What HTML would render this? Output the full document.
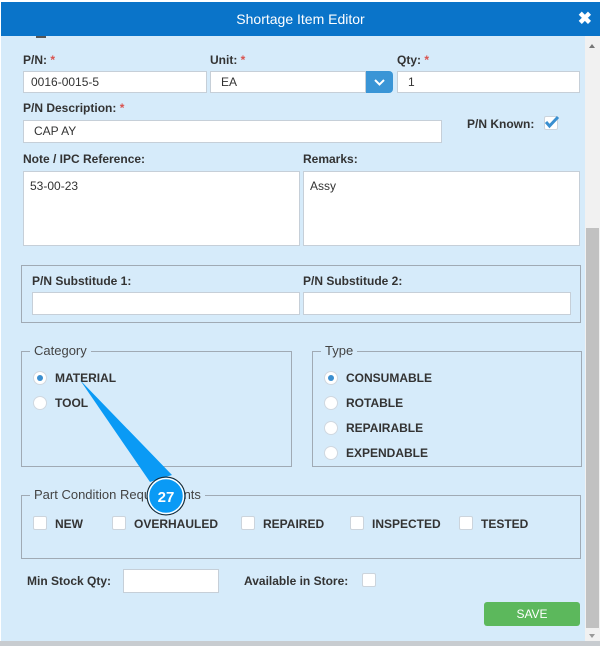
<!DOCTYPE html>
<html><head><style>
*{box-sizing:border-box;margin:0;padding:0}
body{width:600px;height:646px;background:#fff;font-family:"Liberation Sans",Arial,sans-serif;font-size:12px;color:#333;position:relative;overflow:hidden}
.a{position:absolute}
.hdr{left:1px;top:2px;width:599px;height:34px;background:#0a74c9;color:#fff;font-size:14px;text-align:center;line-height:34px}
.body{left:1px;top:36px;width:584px;height:606px;background:#d6ebfa}
.lbl{font-weight:bold;font-size:12px;color:#333}
.req{color:#d9534f}
.in{background:#fff;border:1px solid #c6cfd8;font-size:12px;padding-left:7px;line-height:20px}
fieldset{position:absolute;border:1px solid #a0aab4}
.leg{position:absolute;background:#d6ebfa;font-size:13px;color:#444;padding:0 4px}
.rad{position:absolute;width:14px;height:14px;border-radius:50%;background:#fff;border:1px solid #d0d8e0}
.rad.on::after{content:"";position:absolute;left:3px;top:3px;width:6px;height:6px;border-radius:50%;background:#3a8fd0}
.cb{position:absolute;width:14px;height:14px;background:#fff;border:1px solid #ccd4dc;border-radius:2px}
.t{position:absolute;font-weight:bold;font-size:12px;color:#333}
</style></head><body>
<div class="a hdr">Shortage Item Editor<span style="position:absolute;right:8px;top:0;font-size:17px;font-weight:bold">✖</span></div>
<div class="a body"></div>
<div class="a" style="left:36px;top:36px;width:10px;height:2px;background:#555"></div>
<div class="a" style="left:585px;top:36px;width:15px;height:606px;background:#f1f1f1"></div>
<div class="a" style="left:586px;top:228px;width:13px;height:400px;background:#c1c1c1"></div>
<div class="a" style="left:589px;top:44px;border:3px solid transparent;border-bottom:4px solid #777;border-top:0"></div>
<div class="a" style="left:589px;top:634px;border:3px solid transparent;border-top:4px solid #999;border-bottom:0"></div>
<div class="a" style="left:0;top:641px;width:600px;height:5px;background:#c8ccd0"></div>

<div class="a lbl" style="left:23px;top:53px">P/N: <span class="req">*</span></div>
<div class="a lbl" style="left:210px;top:53px">Unit: <span class="req">*</span></div>
<div class="a lbl" style="left:397px;top:53px">Qty: <span class="req">*</span></div>
<div class="a in" style="left:23px;top:71px;width:184px;height:22px">0016-0015-5</div>
<div class="a in" style="left:210px;top:71px;width:156px;height:22px;padding-left:10px">EA</div>
<div class="a" style="left:366px;top:71px;width:27px;height:22px;background:#3a95d6;border-radius:0 4px 4px 0"><svg width="27" height="22"><path d="M9 9l4.5 4.5L18 9" stroke="#fff" stroke-width="2" fill="none"/></svg></div>
<div class="a in" style="left:397px;top:71px;width:183px;height:22px;padding-left:10px">1</div>
<div class="a lbl" style="left:23px;top:101px">P/N Description: <span class="req">*</span></div>
<div class="a in" style="left:23px;top:120px;width:419px;height:23px;padding-left:10px">CAP AY</div>
<div class="a lbl" style="left:467px;top:117px">P/N Known:</div>
<div class="cb" style="left:544px;top:116px"></div>
<svg class="a" style="left:543px;top:114px" width="18" height="16"><path d="M3 8l3.5 4L15 3" stroke="#3a8fd0" stroke-width="3" fill="none"/></svg>
<div class="a lbl" style="left:23px;top:152px">Note / IPC Reference:</div>
<div class="a lbl" style="left:303px;top:152px">Remarks:</div>
<div class="a in" style="left:23px;top:171px;width:277px;height:75px;line-height:28px;padding-left:6px">53-00-23</div>
<div class="a in" style="left:303px;top:171px;width:277px;height:75px;line-height:28px;padding-left:6px">Assy</div>

<fieldset style="left:21px;top:265px;width:560px;height:58px"></fieldset>
<div class="a lbl" style="left:32px;top:274px">P/N Substitude 1:</div>
<div class="a lbl" style="left:303px;top:274px">P/N Substitude 2:</div>
<div class="a in" style="left:32px;top:292px;width:268px;height:23px"></div>
<div class="a in" style="left:303px;top:292px;width:268px;height:23px"></div>

<fieldset style="left:21px;top:351px;width:271px;height:116px"></fieldset>
<div class="leg" style="left:30px;top:343px">Category</div>
<div class="rad on" style="left:33px;top:371px"></div><div class="t" style="left:55px;top:371px">MATERIAL</div>
<div class="rad" style="left:33px;top:396px"></div><div class="t" style="left:55px;top:396px">TOOL</div>

<fieldset style="left:312px;top:351px;width:270px;height:116px"></fieldset>
<div class="leg" style="left:321px;top:343px">Type</div>
<div class="rad on" style="left:324px;top:371px"></div><div class="t" style="left:346px;top:371px">CONSUMABLE</div>
<div class="rad" style="left:324px;top:396px"></div><div class="t" style="left:346px;top:396px">ROTABLE</div>
<div class="rad" style="left:324px;top:421px"></div><div class="t" style="left:346px;top:421px">REPAIRABLE</div>
<div class="rad" style="left:324px;top:446px"></div><div class="t" style="left:346px;top:446px">EXPENDABLE</div>

<fieldset style="left:21px;top:495px;width:560px;height:64px"></fieldset>
<div class="leg" style="left:30px;top:487px">Part Condition Requirements</div>
<div class="cb" style="left:33px;top:516px"></div><div class="t" style="left:55px;top:517px">NEW</div>
<div class="cb" style="left:112px;top:516px"></div><div class="t" style="left:134px;top:517px">OVERHAULED</div>
<div class="cb" style="left:241px;top:516px"></div><div class="t" style="left:263px;top:517px">REPAIRED</div>
<div class="cb" style="left:350px;top:516px"></div><div class="t" style="left:372px;top:517px">INSPECTED</div>
<div class="cb" style="left:459px;top:516px"></div><div class="t" style="left:481px;top:517px">TESTED</div>

<div class="t" style="left:27px;top:574px">Min Stock Qty:</div>
<div class="a in" style="left:123px;top:569px;width:96px;height:24px"></div>
<div class="t" style="left:244px;top:574px">Available in Store:</div>
<div class="cb" style="left:362px;top:573px"></div>
<div class="a" style="left:484px;top:602px;width:96px;height:24px;background:#5cb85c;border-radius:3px;color:#fff;text-align:center;line-height:24px;font-size:12px">SAVE</div>

<svg class="a" style="left:0;top:0" width="600" height="646"><path d="M80 380L172 475L150 482Z" fill="#0a9af5"/><circle cx="166" cy="496" r="19" fill="#0a9af5" stroke="#222" stroke-width="1"/><circle cx="166" cy="496" r="17.5" fill="none" stroke="#fff" stroke-width="1.5"/><text x="166" y="502" text-anchor="middle" fill="#fff" font-family="Liberation Sans" font-weight="bold" font-size="15">27</text></svg>
</body></html>
